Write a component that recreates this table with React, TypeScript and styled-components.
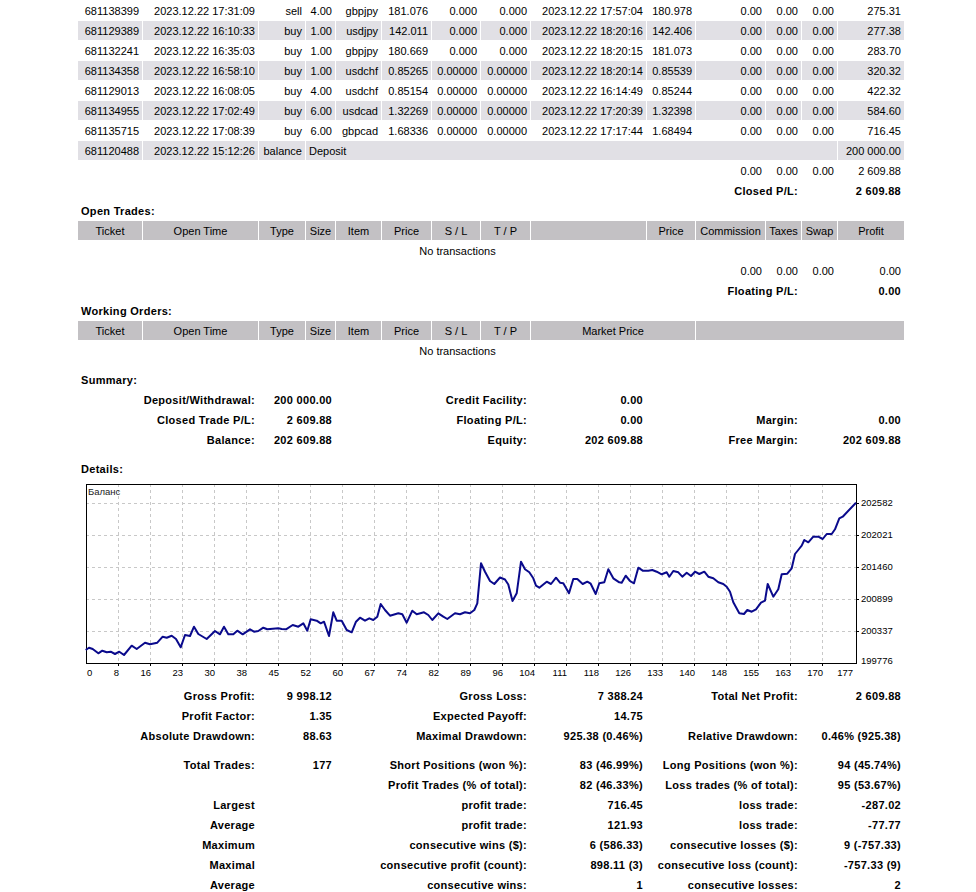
import React from "react";
import styled, { createGlobalStyle } from "styled-components";

const GlobalStyle = createGlobalStyle`
  html, body { margin: 0; padding: 0; background: #ffffff; }
  body { font-family: "Liberation Sans", Arial, sans-serif; color: #000; }
`;

const Page = styled.div`
  padding: 1px 0 0 78px;
`;

const Sheet = styled.div`
  display: grid;
  grid-template-columns: 64px 115px 46px 29px 45px 49px 48px 49px 115px 48px 69px 35px 35px 66px;
  column-gap: 1px;
  row-gap: 1px;
  width: 826px;
`;

type Tone = "header" | "stripe" | "plain";

const Cell = styled.div<{ $span?: number; $align?: "left" | "right" | "center"; $tone?: Tone; $bold?: boolean }>`
  grid-column: span ${(p) => p.$span ?? 1};
  box-sizing: border-box;
  height: 19px;
  line-height: 21px;
  padding: 0 3px;
  font-size: 11px;
  white-space: nowrap;
  overflow: visible;
  text-align: ${(p) => p.$align ?? "right"};
  font-weight: ${(p) => (p.$bold ? 700 : 400)};
  letter-spacing: ${(p) => (p.$bold ? "0.3px" : "0")};
  background: ${(p) => (p.$tone === "header" ? "#c3c1c4" : p.$tone === "stripe" ? "#e1e0e5" : "transparent")};
`;

const Spacer = styled.div`
  grid-column: 1 / -1;
  height: 8px;
`;

const ChartCell = styled.div`
  grid-column: 1 / -1;
  height: 200px;
  padding: 3px 0;
  display: flex;
  justify-content: center;
`;

type Row = string[];

const trades: Row[] = [
  ["681138399", "2023.12.22 17:31:09", "sell", "4.00", "gbpjpy", "181.076", "0.000", "0.000", "2023.12.22 17:57:04", "180.978", "0.00", "0.00", "0.00", "275.31"],
  ["681129389", "2023.12.22 16:10:33", "buy", "1.00", "usdjpy", "142.011", "0.000", "0.000", "2023.12.22 18:20:16", "142.406", "0.00", "0.00", "0.00", "277.38"],
  ["681132241", "2023.12.22 16:35:03", "buy", "1.00", "gbpjpy", "180.669", "0.000", "0.000", "2023.12.22 18:20:15", "181.073", "0.00", "0.00", "0.00", "283.70"],
  ["681134358", "2023.12.22 16:58:10", "buy", "1.00", "usdchf", "0.85265", "0.00000", "0.00000", "2023.12.22 18:20:14", "0.85539", "0.00", "0.00", "0.00", "320.32"],
  ["681129013", "2023.12.22 16:08:05", "buy", "4.00", "usdchf", "0.85154", "0.00000", "0.00000", "2023.12.22 16:14:49", "0.85244", "0.00", "0.00", "0.00", "422.32"],
  ["681134955", "2023.12.22 17:02:49", "buy", "6.00", "usdcad", "1.32269", "0.00000", "0.00000", "2023.12.22 17:20:39", "1.32398", "0.00", "0.00", "0.00", "584.60"],
  ["681135715", "2023.12.22 17:08:39", "buy", "6.00", "gbpcad", "1.68336", "0.00000", "0.00000", "2023.12.22 17:17:44", "1.68494", "0.00", "0.00", "0.00", "716.45"],
];

type StatRow = [string, string, string, string, string, string];

const summaryRows: StatRow[] = [
  ["Deposit/Withdrawal:", "200 000.00", "Credit Facility:", "0.00", "", ""],
  ["Closed Trade P/L:", "2 609.88", "Floating P/L:", "0.00", "Margin:", "0.00"],
  ["Balance:", "202 609.88", "Equity:", "202 609.88", "Free Margin:", "202 609.88"],
];

const statsA: StatRow[] = [
  ["Gross Profit:", "9 998.12", "Gross Loss:", "7 388.24", "Total Net Profit:", "2 609.88"],
  ["Profit Factor:", "1.35", "Expected Payoff:", "14.75", "", ""],
  ["Absolute Drawdown:", "88.63", "Maximal Drawdown:", "925.38 (0.46%)", "Relative Drawdown:", "0.46% (925.38)"],
];

const statsB: StatRow[] = [
  ["Total Trades:", "177", "Short Positions (won %):", "83 (46.99%)", "Long Positions (won %):", "94 (45.74%)"],
  ["", "", "Profit Trades (% of total):", "82 (46.33%)", "Loss trades (% of total):", "95 (53.67%)"],
  ["Largest", "", "profit trade:", "716.45", "loss trade:", "-287.02"],
  ["Average", "", "profit trade:", "121.93", "loss trade:", "-77.77"],
  ["Maximum", "", "consecutive wins ($):", "6 (586.33)", "consecutive losses ($):", "9 (-757.33)"],
  ["Maximal", "", "consecutive profit (count):", "898.11 (3)", "consecutive loss (count):", "-757.33 (9)"],
  ["Average", "", "consecutive wins:", "1", "consecutive losses:", "2"],
];

const openHeader: [string, number][] = [
  ["Ticket", 1], ["Open Time", 1], ["Type", 1], ["Size", 1], ["Item", 1], ["Price", 1], ["S / L", 1], ["T / P", 1],
  ["", 1], ["Price", 1], ["Commission", 1], ["Taxes", 1], ["Swap", 1], ["Profit", 1],
];

const orderHeader: [string, number][] = [
  ["Ticket", 1], ["Open Time", 1], ["Type", 1], ["Size", 1], ["Item", 1], ["Price", 1], ["S / L", 1], ["T / P", 1],
  ["Market Price", 2], ["", 4],
];

const HeaderRow = ({ cols }: { cols: [string, number][] }) => (
  <>
    {cols.map(([t, s], i) => (
      <Cell key={i} $span={s} $align="center" $tone="header">
        {t}
      </Cell>
    ))}
  </>
);

const StatLine = ({ row }: { row: StatRow }) => (
  <>
    <Cell $span={2} $bold>{row[0]}</Cell>
    <Cell $span={2} $bold>{row[1]}</Cell>
    <Cell $span={4} $bold>{row[2]}</Cell>
    <Cell $span={1} $bold>{row[3]}</Cell>
    <Cell $span={3} $bold>{row[4]}</Cell>
    <Cell $span={2} $bold>{row[5]}</Cell>
  </>
);

const SectionTitle = ({ text }: { text: string }) => (
  <Cell $span={14} $align="left" $bold>
    {text}
  </Cell>
);

const Totals = ({ profit }: { profit: string }) => (
  <>
    <Cell $span={10} />
    <Cell>0.00</Cell>
    <Cell>0.00</Cell>
    <Cell>0.00</Cell>
    <Cell>{profit}</Cell>
  </>
);

const TotalLabel = ({ label, value }: { label: string; value: string }) => (
  <>
    <Cell $span={9} />
    <Cell $span={3} $bold>{label}</Cell>
    <Cell />
    <Cell $bold>{value}</Cell>
  </>
);

const NoTransactions = () => (
  <>
    <Cell $span={13} $align="center">No transactions</Cell>
    <Cell />
  </>
);

const pts: [number, number][] = [
  [85.7,650],[89,647.7],[92.7,649],[98.3,653.3],[102.3,650.7],[106.7,652.3],[110.7,651.7],[115,654],[119.3,651.7],[124,655],[131.7,645.7],[136.7,649],[145,642.7],[150,644.3],[157.3,642.7],[162.7,636.7],[166.7,637.7],[171.7,635.7],[176,639],[180.7,647.3],[185,635],[190,636],[194,626.7],[198.3,634],[206.7,639],[215,631],[220,634.3],[224,626.7],[228.3,634.3],[233.3,634.3],[237.3,630.7],[242.7,634.3],[250,629.3],[254,631.7],[258.3,631],[263.3,627.7],[267.3,629.3],[278.3,628.3],[281.7,629],[286,629.3],[292.7,625],[298.3,626.7],[303.3,623.3],[307.3,630.7],[310.7,619.3],[316.7,620.7],[320.7,623.3],[324,621.7],[329,636],[333.3,612.3],[336.7,620.7],[341.7,620.7],[346.7,630],[351.7,632.3],[356,621.7],[360,617.7],[365,620.7],[369.3,618.3],[373.3,620],[377.3,616.7],[380.7,604],[385,610],[390,615.7],[398.3,613.3],[402.3,614.3],[406.7,622.7],[412.3,610.7],[416.7,614.3],[424,612.3],[428.3,615],[432.3,620],[438.3,613.3],[443.3,616.7],[447.3,619],[455,613.3],[460,614.3],[465,612.3],[470,613.3],[474.3,610],[477.3,603.3],[481,563.3],[485,571.7],[490,581],[494.3,584],[500,577.5],[505,579.5],[508.3,584.5],[512.5,601],[516.7,593.3],[521,561.7],[525,569.3],[529.3,572.3],[533.3,578.3],[536,585.7],[539.3,587.7],[546.7,581.7],[551,584],[556,577.7],[560,582.7],[563.3,583.3],[569,593.3],[573.3,579],[577.3,579],[582.7,584],[587.3,581.7],[590.7,583.7],[595.7,594],[599.3,583.3],[604.3,582.3],[608.3,569.3],[613.3,578.3],[619.3,582.3],[621.7,582.7],[625.7,575.7],[630,581],[634,583.3],[638.3,567.7],[642.7,570.7],[648.3,570.7],[652.3,570],[656.7,571.7],[661.7,574.3],[666.7,572.3],[669.3,576.7],[673.3,571],[678.3,572.3],[682.3,576.7],[686.7,572.7],[691,576],[695,571.7],[699.3,574],[704.3,571.7],[708.3,576.7],[713.3,578.3],[718.3,582.3],[723.3,584],[726.7,586.7],[730,591.7],[733.3,602.3],[739.3,613.3],[744,614],[747.3,610],[751.7,611.7],[756,609.3],[761,602.7],[765,600.7],[767.7,584],[773.3,596.7],[778.3,589.3],[781.7,574.3],[787.3,573.7],[791.7,568.3],[795,554],[799,549],[801.7,545.7],[804.3,540],[808.3,542.3],[813.3,536.7],[818.3,536.7],[822.7,539],[826.7,534],[831.7,534],[835,529.3],[839.3,518.3],[842.7,516.7],[856,502.7],
];

const xLabels = ["8","16","23","30","38","45","52","60","67","74","82","89","96","104","111","118","126","133","140","148","155","163","170"];
const yLabels = ["202582", "202021", "201460", "200899", "200337"];

const ChartSvg = styled.svg`
  display: block;
  font-family: "Liberation Sans", Arial, sans-serif;
`;

const BalanceChart = () => {
  const ox = 81;
  const oy = 482;
  const L = 5, T = 2, R = 775, B = 181;
  const line = pts.map(([x, y]) => `${(x - ox).toFixed(1)},${(y - oy).toFixed(1)}`).join(" ");
  return (
    <ChartSvg width={820} height={200} viewBox="0 0 820 200">
      <rect x={0} y={0} width={820} height={200} fill="#fff" />
      {xLabels.map((_, i) => {
        const x = L + 32 * (i + 1) + 0.5;
        return <line key={"v" + i} x1={x} y1={T} x2={x} y2={B} stroke="#c8c8c8" strokeDasharray="3 3" />;
      })}
      {yLabels.map((_, i) => {
        const y = B - 32 * (5 - i) + 0.5;
        return <line key={"h" + i} x1={L} y1={y} x2={R} y2={y} stroke="#c8c8c8" strokeDasharray="3 3" />;
      })}
      <rect x={L + 0.5} y={T + 0.5} width={R - L} height={B - T} fill="none" stroke="#000" strokeWidth={1} />
      {xLabels.map((_, i) => {
        const x = L + 32 * (i + 1) + 0.5;
        return <line key={"tx" + i} x1={x} y1={B} x2={x} y2={B + 3} stroke="#000" />;
      })}
      {yLabels.map((_, i) => {
        const y = B - 32 * (5 - i) + 0.5;
        return <line key={"ty" + i} x1={R} y1={y} x2={R + 3} y2={y} stroke="#000" />;
      })}
      <polyline points={line} fill="none" stroke="#0a0a8c" strokeWidth={2} strokeLinejoin="round" />
      <text x={L + 2} y={T + 11} fontSize={9.5} fill="#222">Баланс</text>
      <text x={L + 1} y={B + 13} fontSize={9.5} fill="#000">0</text>
      {xLabels.map((t, i) => (
        <text key={"xl" + i} x={L + 32 * (i + 1) + 1} y={B + 13} fontSize={9.5} textAnchor="end" fill="#000">
          {t}
        </text>
      ))}
      <text x={772} y={B + 13} fontSize={9.5} textAnchor="end" fill="#000">177</text>
      {yLabels.map((t, i) => (
        <text key={"yl" + i} x={R + 5} y={B - 32 * (5 - i) + 3} fontSize={9.5} fill="#000">
          {t}
        </text>
      ))}
      <text x={R + 5} y={B + 1} fontSize={9.5} fill="#000">199776</text>
    </ChartSvg>
  );
};

export default function App() {
  return (
    <>
      <GlobalStyle />
      <Page>
        <Sheet>
          {trades.map((r, ri) => (
            <React.Fragment key={ri}>
              {r.map((c, ci) => (
                <Cell key={ci} $tone={ri % 2 === 1 ? "stripe" : "plain"}>
                  {c}
                </Cell>
              ))}
            </React.Fragment>
          ))}
          <Cell $tone="stripe">681120488</Cell>
          <Cell $tone="stripe">2023.12.22 15:12:26</Cell>
          <Cell $tone="stripe">balance</Cell>
          <Cell $tone="stripe" $span={10} $align="left">Deposit</Cell>
          <Cell $tone="stripe">200 000.00</Cell>
          <Totals profit="2 609.88" />
          <TotalLabel label="Closed P/L:" value="2 609.88" />

          <SectionTitle text="Open Trades:" />
          <HeaderRow cols={openHeader} />
          <NoTransactions />
          <Totals profit="0.00" />
          <TotalLabel label="Floating P/L:" value="0.00" />

          <SectionTitle text="Working Orders:" />
          <HeaderRow cols={orderHeader} />
          <NoTransactions />

          <Spacer />
          <SectionTitle text="Summary:" />
          {summaryRows.map((r, i) => (
            <StatLine key={i} row={r} />
          ))}
          <Spacer />
          <SectionTitle text="Details:" />
          <ChartCell>
            <BalanceChart />
          </ChartCell>
          {statsA.map((r, i) => (
            <StatLine key={i} row={r} />
          ))}
          <Spacer />
          {statsB.map((r, i) => (
            <StatLine key={i} row={r} />
          ))}
        </Sheet>
      </Page>
    </>
  );
}
